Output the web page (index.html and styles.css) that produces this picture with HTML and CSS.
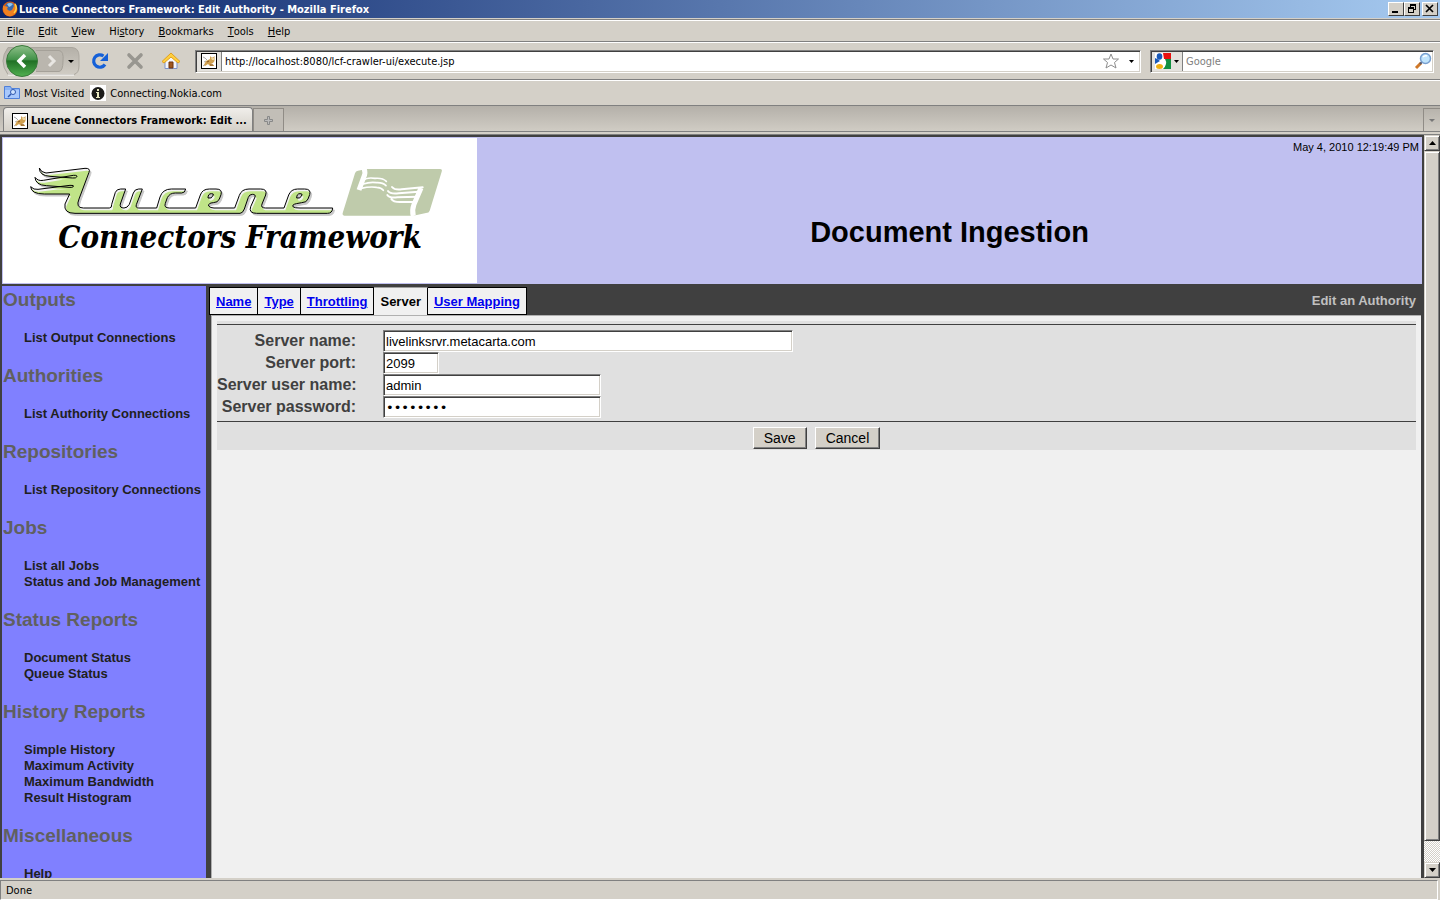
FILE: index.html
```html
<!DOCTYPE html>
<html lang="en">
<head>
  <title>Lucene Connectors Framework: Edit Authority</title>
  <meta charset="UTF-8" />
  <link rel="stylesheet" href="styles.css">
</head>
<body>
  <!-- shared favicon -->
  <svg class="defs" width="0" height="0" aria-hidden="true">
    <symbol id="cat" viewBox="0 0 16 16">
      <rect x="0.5" y="0.5" width="15" height="15" fill="#fff" stroke="#000"/>
      <path d="M2 4l2 1 2 2M2 13l3-2M3 9l2-1" fill="none" stroke="#aaa"/>
      <path d="M3 12l2-4 4-2 0-3 1.500 1.500h1.500L13.500 3v5l-1.500 2-2 1 3 1v1h-4l-2-2-3 2z" fill="#d0a050"/>
      <path d="M10 5h3v2h-2z" fill="#f0d8a0"/>
      <path d="M6 9l2-1M9 12h3" stroke="#805020" fill="none"/>
    </symbol>
  </svg>

  <header class="titlebar">
    <svg width="16" height="16" viewBox="0 0 16 16">
      <circle cx="8" cy="8" r="7.5" fill="#d85a10"/>
      <circle cx="8" cy="6.5" r="5" fill="#3768b0"/>
      <path d="M5 3q3-2 6 0l-2 2-2 1z" fill="#90c8f0"/>
      <path d="M1 3q0 3 2 2l3 1-1 2q2 3 5 1l2-4-1-2q5 3 3 8-3 5-8 4Q0 13 1 3z" fill="#f08020"/>
      <path d="M13 3q3 5-1 9" fill="none" stroke="#ffd040" stroke-width="1.5"/>
    </svg>
    <span class="title">Lucene Connectors Framework: Edit Authority - Mozilla Firefox</span>
    <button class="winbtn" aria-label="Minimize"><svg width="12" height="10"><path d="M2 7h6v2H2z"/></svg></button>
    <button class="winbtn" aria-label="Restore"><svg width="12" height="10"><path d="M4 0h6v6H8V5h1V2H5v1H4zM2 3h6v6H2zM3 5v3h4V5z" fill-rule="evenodd"/></svg></button>
    <button class="winbtn close" aria-label="Close"><svg width="12" height="10"><path d="M2 1l7 7M9 1L2 8" stroke="#000" stroke-width="1.7"/></svg></button>
  </header>

  <nav class="menubar">
    <button><u>F</u>ile</button>
    <button><u>E</u>dit</button>
    <button><u>V</u>iew</button>
    <button>Hi<u>s</u>tory</button>
    <button><u>B</u>ookmarks</button>
    <button><u>T</u>ools</button>
    <button><u>H</u>elp</button>
  </nav>

  <div class="toolbar">
    <button class="history" aria-label="Back and forward">
      <svg width="78" height="34" viewBox="0 0 78 34">
        <defs>
          <linearGradient id="back" x1="0" y1="0" x2="0" y2="1">
            <stop offset="0" stop-color="#8ec08a"/>
            <stop offset=".45" stop-color="#43934a"/>
            <stop offset=".5" stop-color="#217025"/>
            <stop offset="1" stop-color="#50b050"/>
          </linearGradient>
          <linearGradient id="pill" x1="0" y1="0" x2="0" y2="1">
            <stop offset="0" stop-color="#b4b0a8"/>
            <stop offset="1" stop-color="#d0ccc4"/>
          </linearGradient>
        </defs>
        <path d="M6 3.500H70Q77 4 77 12V22Q77 29 72 30.500H6Q-4 17 6 3.500z" fill="url(#pill)" stroke="#aaa69e"/>
        <path d="M6 31H72" stroke="#fff"/>
        <path d="M34 6.500H57Q62 7 61 17 61 27 57 27.500H34" fill="#bab6ae" stroke="#a5a199"/>
        <path d="M47 12l5 5-5 5" fill="none" stroke="#e8e6e2" stroke-width="3"/>
        <circle cx="20" cy="17" r="15.500" fill="url(#back)" stroke="#397a3b"/>
        <path d="M23 11l-6 6 6 6" fill="none" stroke="#fff" stroke-width="3.500"/>
        <path d="M66 16h6l-3 3z"/>
      </svg>
    </button>
    <button aria-label="Reload">
      <svg width="18" height="18" viewBox="0 0 18 18"><path d="M14 12.500A6.200 6.200 0 1 1 12.500 4" fill="none" stroke="#1560d8" stroke-width="3.200"/><path d="M17 1v8H9z" fill="#1560d8"/></svg>
    </button>
    <button aria-label="Stop">
      <svg width="18" height="18" viewBox="0 0 18 18"><path d="M3 3l12 12M15 3L3 15" stroke="#989690" stroke-width="3.600" stroke-linecap="round"/></svg>
    </button>
    <button aria-label="Home">
      <svg width="20" height="18" viewBox="0 0 20 18"><path d="M4 8v8.500h12V8l-6-5z" fill="#f4f6fc" stroke="#7c92c8"/><path d="M10 1L1 9.500l2 1.500 7-6 7 6 2-1.500z" fill="#ffd040" stroke="#e0a020"/><path d="M8 10h4v6H8z" fill="#a05820" stroke="#6c3410"/></svg>
    </button>
    <div class="field url">
      <span class="identity"><svg width="16" height="16"><use href="#cat"/></svg></span>
      <input type="text" aria-label="Location" value="http://localhost:8080/lcf-crawler-ui/execute.jsp">
      <svg width="16" height="16" viewBox="0 0 16 16"><path d="M8 1l2 5h5.500l-4 3.500L13 15l-5-3-5 3 1.500-5.500L.5 6H6z" fill="#fff" stroke="#8c8c8c"/></svg>
      <svg width="5" height="3"><path d="M0 0h5L2.500 3z"/></svg>
    </div>
    <div class="field search">
      <span class="identity engine">
        <svg width="16" height="16" viewBox="0 0 16 16"><path d="M0 0h16v16H0z" fill="#fff"/><path d="M8 0h8v6H9z" fill="#e81010"/><path d="M10 6h6v10H8q5-5 2-10z" fill="#109040"/><path d="M0 5q3 1 5 3l-5 3z" fill="#1858b8"/><ellipse cx="4.500" cy="3.500" rx="2.800" ry="3.300" fill="#1858b8"/><ellipse cx="4.500" cy="13.500" rx="3.500" ry="2.500" fill="#f0b010"/></svg>
        <svg width="5" height="3"><path d="M0 0h5L2.500 3z"/></svg>
      </span>
      <input type="text" aria-label="Search" placeholder="Google">
      <svg width="18" height="18" viewBox="0 0 18 18"><path d="M2 16l5-5" stroke="#d07828" stroke-width="3"/><path d="M6 12l2-2" stroke="#556" stroke-width="2"/><circle cx="11.500" cy="6.500" r="5" fill="#c0e4fc" stroke="#78a0d0" stroke-width="1.500"/><path d="M9 5q2-2 4-1" stroke="#fff" stroke-width="1.500" fill="none"/></svg>
    </div>
  </div>

  <nav class="bookmarks">
    <a href="#"><svg width="16" height="16" viewBox="0 0 16 16"><path d="M.5 1.500h6l1 2h8v10H.500z" fill="#8cb4f4" stroke="#5080d8"/><path d="M1 5h14v8H1z" fill="#a8c8fc"/><circle cx="9" cy="7" r="2.500" fill="#d0e4ff" stroke="#3058b0"/><path d="M7 9l-3 3" stroke="#3058b0" stroke-width="1.500"/></svg>Most Visited</a>
    <a href="#"><svg width="16" height="16" viewBox="0 0 16 16"><path d="M0 0h16v16H0z" fill="#fff"/><circle cx="8" cy="8.500" r="6.500" fill="#1c1c1a"/><path d="M7 4h2v2H7zM6 7h3v5h1v1H6v-1h1V8H6z" fill="#e8e8c0"/></svg>Connecting.Nokia.com</a>
  </nav>

  <div class="tabstrip">
    <button class="tab"><svg width="16" height="16"><use href="#cat"/></svg>Lucene Connectors Framework: Edit ...</button>
    <button class="newtab" aria-label="New tab"><svg width="9" height="9"><path d="M3.500.5h2v3h3v2h-3v3h-2v-3h-3v-2h3z" fill="#bbb" stroke="#888"/></svg></button>
    <button class="alltabs" aria-label="List all tabs"><svg width="6" height="3"><path d="M0 0h6L3 3z" fill="#777"/></svg></button>
  </div>

  <div class="viewport">
    <div class="page">
      <div class="banner">
        <div class="logo">
          <svg viewBox="9 7 1425 246" width="475" height="82" aria-label="Lucene">
            <defs>
              <path id="lucene" d="M118 97Q122 110 138 112L255 98Q272 97 267 110L237 190Q226 217 250 217H328Q336 217 335 206L346 170Q350 160 362 160H377L361 205Q358 217 372 217 382 217 388 206L400 172Q404 160 416 160H427L409 207Q406 217 416 217H470L480 184Q488 160 514 160H557Q555 172 545 172H526Q509 172 502 186L496 203Q491 217 508 217H587L601 178Q607 160 628 160H648Q668 160 663 177L658 190Q654 201 640 201 624 202 626 211 630 217 642 217H704L718 179Q725 160 747 160H782Q803 160 797 178L786 205Q781 217 797 217H852L866 178Q873 160 893 160H914Q934 160 929 177L924 190Q920 201 905 201L889 204Q874 207 880 214 884 217 900 217H998Q997 233 982 233H770Q745 233 752 213L765 184Q768 176 757 176 748 176 745 185L733 220Q728 233 720 233H225Q190 233 195 205L209 175H133Q93 175 92 153 101 163 114 161L210 149Q224 148 220 153 217 156 207 155L139 150Q106 148 105 125 114 137 130 134L220 119Q234 118 230 124 228 128 218 127L150 122Q118 120 118 97zM634 174Q624 174 624 187 635 191 640 178 642 174 634 174zM900 174Q890 174 890 187 901 191 906 178 908 174 900 174z"/>
              <clipPath id="lucene-clip"><use href="#lucene"/></clipPath>
            </defs>
            <use href="#lucene" x="5" y="6" fill="#c8c8c8" stroke="#c8c8c8" stroke-width="3"/>
            <use href="#lucene" fill="#f2f2f2"/>
            <g clip-path="url(#lucene-clip)"><use href="#lucene" x="4" y="7" fill="#c0e488"/></g>
            <use href="#lucene" fill="none" stroke="#000" stroke-width="3"/>
            <path d="M1074 105L1100 100H1320Q1328 100 1325 108L1289 225Q1287 232 1278 232L1240 240H1033Q1025 239 1029 229L1065 113Q1067 106 1074 105z" fill="#bfcbab"/>
            <g fill="none" stroke="#fff" stroke-linecap="round">
              <path d="M1092 98Q1098 112 1091 125L1077 163" stroke-width="15" stroke-linecap="butt"/>
              <path d="M1090 135Q1100 124 1125 128 1148 126 1159 137M1090 145Q1110 138 1130 141 1148 140 1158 150M1083 158Q1110 152 1130 155 1144 156 1150 164" stroke-width="5"/>
              <path d="M1263 157L1242 206Q1235 224 1240 241" stroke-width="15" stroke-linecap="butt"/>
              <path d="M1268 155L1205 161Q1184 164 1176 154M1256 168L1196 173Q1171 176 1164 166M1254 183L1192 185Q1168 188 1162 178M1248 199L1204 199Q1180 200 1174 190" stroke-width="6"/>
            </g>
          </svg>
          <span class="logo-name">Connectors Framework</span>
        </div>
        <div class="heading">
          <div class="date">May 4, 2010 12:19:49 PM</div>
          <h1>Document Ingestion</h1>
        </div>
      </div>

      <div class="columns">
        <nav class="sidebar">
          <h2>Outputs</h2>
          <ul>
            <li><a href="#">List Output Connections</a></li>
          </ul>
          <h2>Authorities</h2>
          <ul>
            <li><a href="#">List Authority Connections</a></li>
          </ul>
          <h2>Repositories</h2>
          <ul>
            <li><a href="#">List Repository Connections</a></li>
          </ul>
          <h2>Jobs</h2>
          <ul>
            <li><a href="#">List all Jobs</a></li>
            <li><a href="#">Status and Job Management</a></li>
          </ul>
          <h2>Status Reports</h2>
          <ul>
            <li><a href="#">Document Status</a></li>
            <li><a href="#">Queue Status</a></li>
          </ul>
          <h2>History Reports</h2>
          <ul>
            <li><a href="#">Simple History</a></li>
            <li><a href="#">Maximum Activity</a></li>
            <li><a href="#">Maximum Bandwidth</a></li>
            <li><a href="#">Result Histogram</a></li>
          </ul>
          <h2>Miscellaneous</h2>
          <ul>
            <li><a href="#">Help</a></li>
          </ul>
        </nav>

        <main class="main">
          <div class="pagetabs">
            <a href="#">Name</a>
            <a href="#">Type</a>
            <a href="#">Throttling</a>
            <span class="active">Server</span>
            <a href="#">User Mapping</a>
            <strong>Edit an Authority</strong>
          </div>
          <div class="content">
            <form class="editor">
              <div class="fields">
                <label for="servername">Server name:</label>
                <input id="servername" class="long" type="text" value="livelinksrvr.metacarta.com">
                <label for="serverport">Server port:</label>
                <input id="serverport" class="short" type="text" value="2099">
                <label for="serveruser">Server user name:</label>
                <input id="serveruser" type="text" value="admin">
                <label for="serverpass">Server password:</label>
                <input id="serverpass" class="secret" type="password" value="password">
              </div>
              <div class="buttons">
                <button type="button">Save</button>
                <button type="button">Cancel</button>
              </div>
            </form>
          </div>
        </main>
      </div>
    </div>

    <div class="scrollbar">
      <button aria-label="Scroll up"><svg width="7" height="4"><path d="M0 4h7L3.500 0z"/></svg></button>
      <div class="thumb"></div>
      <div class="track"></div>
      <button aria-label="Scroll down"><svg width="7" height="4"><path d="M0 0h7L3.500 4z"/></svg></button>
    </div>
  </div>

  <footer class="statusbar">Done</footer>
</body>
</html>
```
FILE: styles.css
```css
* {
  box-sizing: border-box;
}

body {
  margin: 0;
  height: 100vh;
  display: flex;
  flex-direction: column;
  overflow: hidden;
  background: #d4d0c8;
  color: #000;
  font-family: "DejaVu Sans Condensed", "DejaVu Sans", sans-serif;
  font-size: 11px;
}

button, input {
  font: inherit;
  color: inherit;
}

button {
  display: flex;
  align-items: center;
  justify-content: center;
  margin: 0;
  padding: 0;
  border: 0;
  background: none;
}

svg {
  display: block;
  flex: none;
}

.defs {
  position: absolute;
}

/* browser window */
.titlebar {
  height: 18px;
  flex: none;
  display: flex;
  align-items: center;
  padding: 0 2px;
  background: linear-gradient(to right, #0a246a, #a6caf0);
  color: #fff;
  font-weight: bold;
}

.title {
  flex: 1;
  padding-left: 1px;
}

.winbtn {
  width: 16px;
  height: 14px;
  background: #d4d0c8;
  border: 1px solid;
  border-color: #fff #404040 #404040 #fff;
}

.close {
  margin-left: 2px;
}

.menubar, .toolbar, .bookmarks {
  flex: none;
  display: flex;
  align-items: center;
  border-top: 1px solid #fff;
  border-bottom: 1px solid #808080;
}

.menubar {
  height: 22px;
  margin-top: 2px;
  gap: 14px;
  padding-left: 7px;
  box-shadow: 0 -1px #808080;
}

.toolbar {
  height: 38px;
  padding: 0 6px 0 2px;
  gap: 17px;
}

.history {
  margin-right: -6px;
}

.field {
  display: flex;
  align-items: center;
  height: 23px;
  background: #fff;
  border: 1px solid;
  border-color: #808080 #fff #fff #808080;
  box-shadow: inset 1px 1px #404040, inset -1px -1px #d4d0c8;
  padding: 1px;
}

.url {
  flex: 1;
  margin-left: -3px;
  padding-right: 6px;
  gap: 10px;
}

.search {
  width: 284px;
  margin-left: -8px;
}

.identity {
  display: flex;
  align-items: center;
  justify-content: center;
  gap: 3px;
  width: 25px;
  height: 19px;
  background: #e4e2de;
  border-right: 1px solid #808080;
}

.url .identity {
  margin-right: -10px;
}

.engine {
  width: 31px;
}

.field input {
  flex: 1;
  min-width: 0;
  padding: 1px 3px 0;
  border: 0;
  outline: 0;
  background: none;
}

.field input::placeholder {
  color: #808080;
}

.bookmarks {
  height: 26px;
  padding-left: 4px;
  gap: 6px;
}

.bookmarks a {
  display: flex;
  align-items: center;
  gap: 4px;
  color: #000;
  text-decoration: none;
}

.tabstrip {
  flex: none;
  display: flex;
  align-items: flex-end;
  height: 26px;
  padding-left: 3px;
  border-bottom: 1px solid #808080;
  background: linear-gradient(#b4b0a9, #d0ccc4);
}

.tab {
  width: 250px;
  height: 24px;
  justify-content: flex-start;
  gap: 3px;
  padding: 2px 0 0 8px;
  border: 1px solid #808080;
  border-bottom: 0;
  border-radius: 4px 4px 0 0;
  background: linear-gradient(#f0eeea, #d4d0c8);
  font-weight: bold;
  white-space: nowrap;
}

.newtab {
  width: 31px;
  height: 23px;
  border: 1px solid #908c86;
  border-bottom: 0;
  background: #c2beb7;
}

.alltabs {
  width: 17px;
  height: 23px;
  margin-left: auto;
  border: 1px solid #908c86;
  border-width: 1px 0 0 1px;
}

/* web page */
.viewport {
  flex: 1;
  min-height: 0;
  display: flex;
  margin-top: 2px;
  border-top: 1px solid #808080;
}

.page {
  flex: 1;
  min-width: 0;
  display: flex;
  flex-direction: column;
  padding: 2px 2px 0;
  background: #404040;
  font-family: "Liberation Sans", Arial, sans-serif;
}

.banner {
  flex: none;
  display: flex;
  height: 147px;
  background: #c0c0f0;
}

.logo {
  margin: 1px 0 1px 1px;
  width: 474px;
  background: #fff;
  text-align: center;
}

.logo-name {
  display: block;
  font: italic bold 31px/34px "DejaVu Serif Condensed", "DejaVu Serif", serif;
}

.heading {
  flex: 1;
  text-align: center;
}

.date {
  padding: 4px 3px 0 0;
  line-height: 13px;
  text-align: right;
}

h1 {
  margin: 60px 0 0;
  font-size: 29px;
  line-height: 36px;
}

.columns {
  flex: 1;
  min-height: 0;
  display: flex;
  gap: 3px;
  padding-top: 2px;
}

.sidebar {
  width: 204px;
  flex: none;
  overflow: hidden;
  padding: 2px 0 0 1px;
  background: #8080ff;
  font-weight: bold;
}

.sidebar h2 {
  margin: 0;
  color: #606060;
  font-size: 19px;
  line-height: 24px;
}

.sidebar ul {
  list-style: none;
  margin: 18px 0;
  padding: 0 0 0 21px;
  font-size: 13px;
  line-height: 16px;
  white-space: nowrap;
}

.sidebar a {
  color: #202020;
  text-decoration: none;
}

.main {
  flex: 1;
  min-width: 0;
  display: flex;
  flex-direction: column;
}

.pagetabs {
  flex: none;
  display: flex;
  height: 29px;
  padding-top: 1px;
  font-size: 13px;
  font-weight: bold;
  line-height: 27px;
}

.pagetabs a, .pagetabs span {
  padding: 0 6px;
  background: #f0f0f0;
  border: 1px solid #000;
  border-left-width: 0;
}

.pagetabs a {
  color: #0000ee;
}

.pagetabs a:first-child {
  border-left-width: 1px;
}

.pagetabs .active {
  margin-bottom: -2px;
  border-top-color: #a0a0a0;
  border-bottom: 0;
}

.pagetabs strong {
  margin-left: auto;
  padding-right: 6px;
  color: #c0c0c0;
}

.content {
  flex: 1;
  margin: 0 1px 0 2px;
  padding: 5px;
  background: #f0f0f0;
  border: 1px solid #b0b0b0;
  border-width: 1px 0 0 1px;
}

.editor {
  padding-top: 3px;
  background: #e0e0e0;
}

.fields {
  display: grid;
  grid-template-columns: 139px 1fr;
  column-gap: 27px;
  grid-auto-rows: 22px;
  padding: 5px 0 3px;
  border: 1px solid #404040;
  border-width: 1px 0;
}

.fields label {
  color: #404040;
  font-size: 16px;
  font-weight: bold;
  line-height: 22px;
  text-align: right;
  white-space: nowrap;
}

.fields input {
  width: 218px;
  height: 22px;
  padding: 1px 2px;
  border: 1px solid;
  border-color: #808080 #fff #fff #808080;
  box-shadow: inset 1px 1px #404040, inset -1px -1px #d4d0c8;
  background: #fff;
  font-size: 13px;
}

.fields .long {
  width: 410px;
}

.fields .short {
  width: 56px;
}

.fields .secret {
  font-family: "DejaVu Sans", sans-serif;
}

.buttons {
  display: flex;
  justify-content: center;
  gap: 8px;
  padding: 5px 0 1px;
}

.buttons button {
  height: 22px;
  padding: 0 10px;
  background: #d4d0c8;
  border: 1px solid;
  border-color: #fff #404040 #404040 #fff;
  box-shadow: inset -1px -1px #808080;
  font-size: 14px;
}

.scrollbar {
  width: 16px;
  flex: none;
  display: flex;
  flex-direction: column;
  background: repeating-conic-gradient(#fff 0 25%, #d4d0c8 0 50%) 0 0 / 2px 2px;
}

.scrollbar button {
  height: 16px;
}

.scrollbar button, .thumb {
  background: #d4d0c8;
  border: 1px solid;
  border-color: #d4d0c8 #404040 #404040 #d4d0c8;
  box-shadow: inset 1px 1px #fff, inset -1px -1px #808080;
}

.thumb {
  flex: 97;
}

.track {
  flex: 3;
}

.statusbar {
  flex: none;
  height: 20px;
  margin: 2px 2px 0 0;
  padding-left: 5px;
  border: 1px solid;
  border-color: #808080 #fff #fff #808080;
  line-height: 20px;
}
```
